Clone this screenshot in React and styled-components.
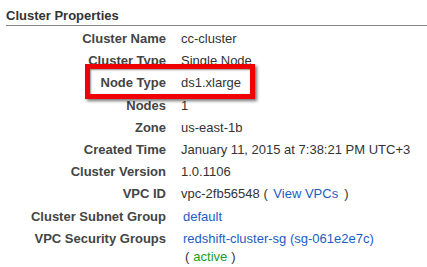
import React from 'react'
import styled, { createGlobalStyle } from 'styled-components'

const GlobalStyle = createGlobalStyle`
  body {
    margin: 0;
    background: #fff;
    font-family: "Liberation Sans", Arial, sans-serif;
    font-size: 13px;
    color: #333;
  }
`

const Panel = styled.div`
  position: relative;
  width: 427px;
  height: 267px;
  padding-left: 6px;
  box-sizing: border-box;
  overflow: hidden;
`

const Title = styled.h2`
  margin: 0;
  padding-top: 7px;
  font-size: 13px;
  line-height: 18px;
  font-weight: bold;
  color: #333;
  border-bottom: 1px solid #858585;
`

const Props = styled.div`
  display: grid;
  grid-template-columns: 160px 1fr;
  column-gap: 15px;
  margin-top: 2px;
`

const Label = styled.div`
  text-align: right;
  font-weight: bold;
  color: #444;
  line-height: 18.2px;
  padding: 2px 0;
  white-space: nowrap;
`

const Value = styled.div`
  color: #333;
  line-height: 18.2px;
  padding: 2px 0;
  white-space: nowrap;
`

const Link = styled.a`
  color: #1a5ec4;
  text-decoration: none;
  margin: ${(p) => p.$space || '0'};
`

const Status = styled.span`
  color: #1c9e22;
  margin: 0 4px;
`

const Highlight = styled.div`
  position: absolute;
  left: 85px;
  top: 64px;
  width: 170px;
  height: 35px;
  box-sizing: border-box;
  border: 5px solid #f00000;
  box-shadow: 2px 2px 3px rgba(0, 0, 0, 0.55), inset 1px 1px 2px rgba(0, 0, 0, 0.45);
  pointer-events: none;
`

const rows = [
  ['Cluster Name', 'cc-cluster'],
  ['Cluster Type', 'Single Node'],
  ['Node Type', 'ds1.xlarge'],
  ['Nodes', '1'],
  ['Zone', 'us-east-1b'],
  ['Created Time', 'January 11, 2015 at 7:38:21 PM UTC+3'],
  ['Cluster Version', '1.0.1106'],
  [
    'VPC ID',
    <>
      vpc-2fb56548 ({' '}
      <Link href="#" $space="0 0 0 2px">View VPCs</Link>
      <span style={{ marginLeft: 6 }}>)</span>
    </>,
  ],
  ['Cluster Subnet Group', <Link href="#" $space="0 0 0 2px">default</Link>],
  [
    'VPC Security Groups',
    <>
      <Link href="#" $space="0 0 0 2px">redshift-cluster-sg (sg-061e2e7c)</Link>
      <br />
      <span style={{ marginLeft: 4 }}>(</span>
      <Status>active</Status>)
    </>,
  ],
]

const App = () => (
  <Panel>
    <GlobalStyle />
    <Title>Cluster Properties</Title>
    <Props>
      {rows.map(([label, value]) => (
        <React.Fragment key={label}>
          <Label>{label}</Label>
          <Value>{value}</Value>
        </React.Fragment>
      ))}
    </Props>
    <Highlight />
  </Panel>
)

export default App
